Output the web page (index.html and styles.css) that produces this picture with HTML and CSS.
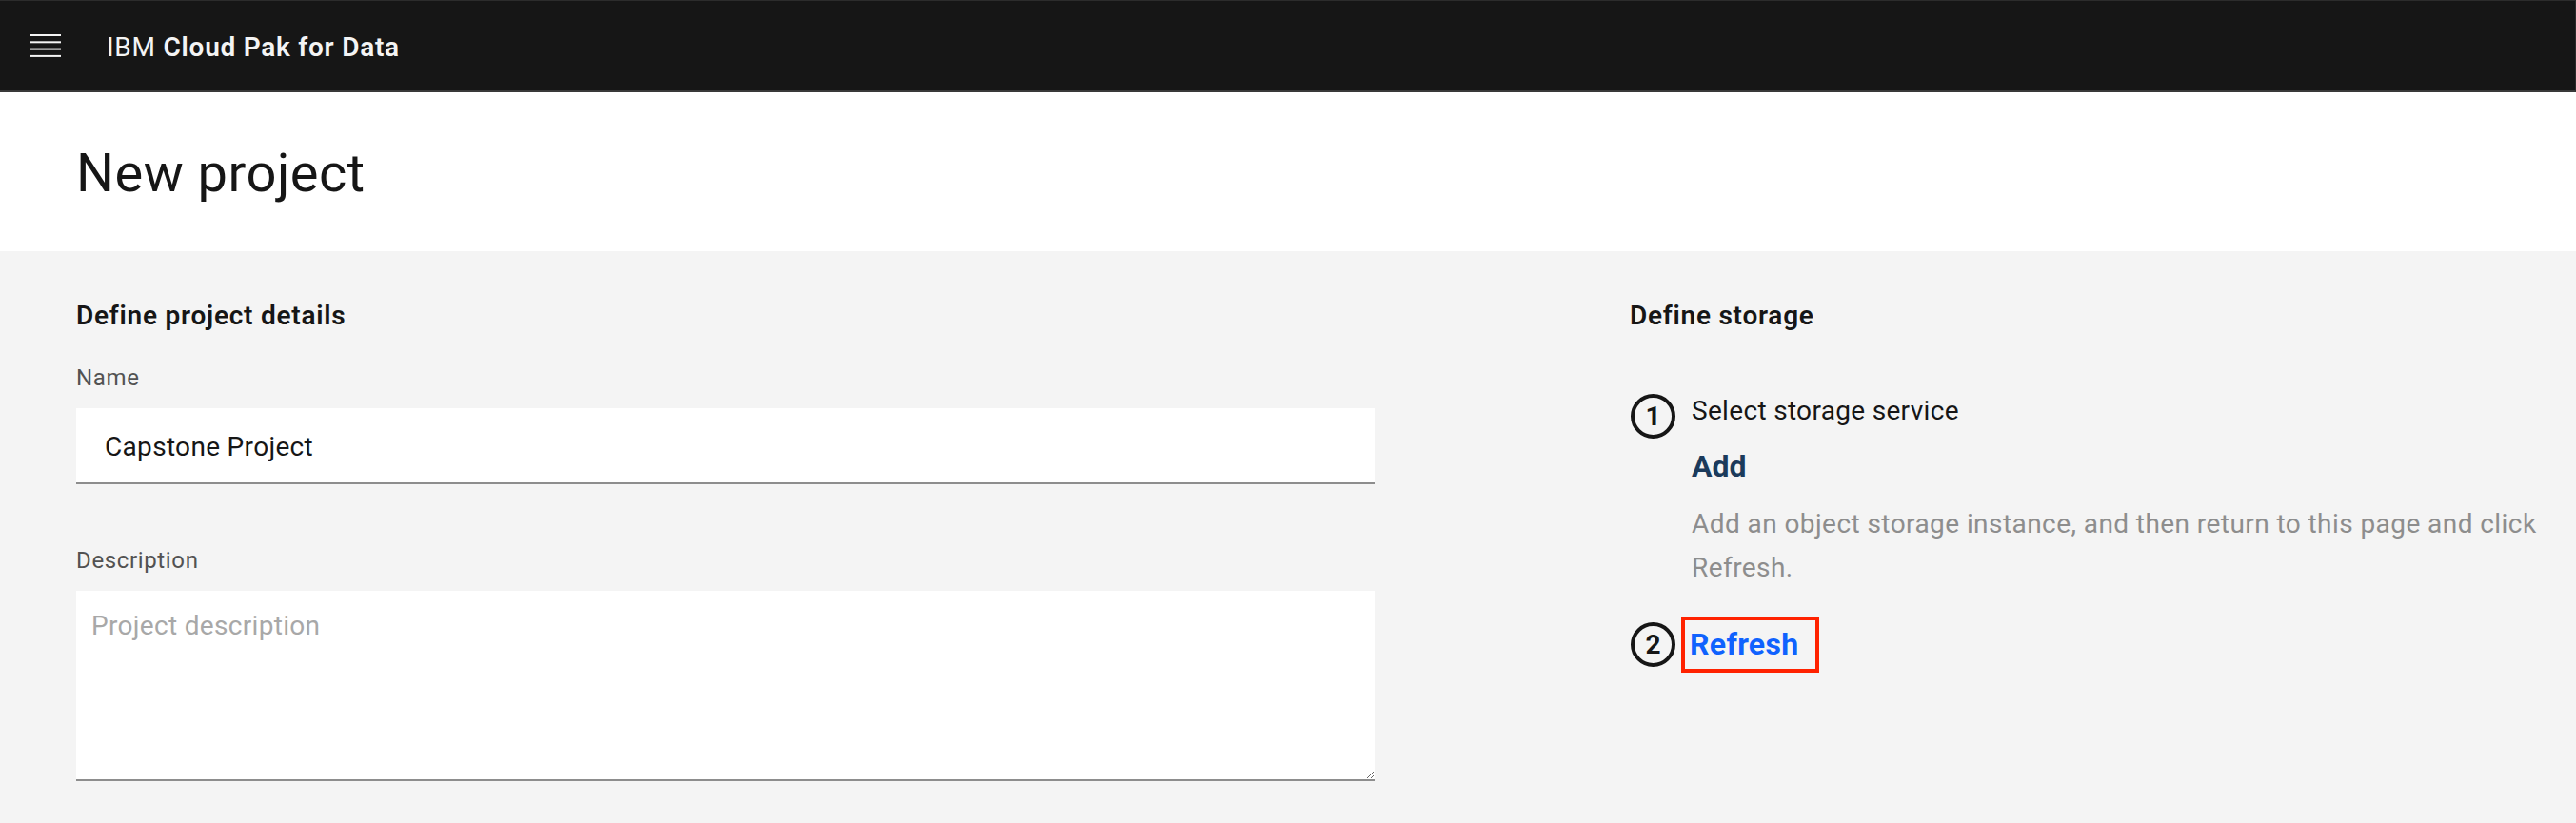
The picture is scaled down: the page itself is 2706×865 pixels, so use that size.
FILE: index.html
```html
<!DOCTYPE html>
<html lang="en">
<head>
<meta charset="utf-8">
<title>New project - IBM Cloud Pak for Data</title>
<link rel="stylesheet" href="styles.css">
</head>
<body>
<header class="topbar">
  <button class="menu" aria-label="Menu">
    <svg width="32" height="24" viewBox="0 0 32 24" aria-hidden="true">
      <rect x="0" y="0" width="32" height="2" fill="#f4f4f4"/>
      <rect x="0" y="7.3" width="32" height="2" fill="#f4f4f4"/>
      <rect x="0" y="14.6" width="32" height="2" fill="#f4f4f4"/>
      <rect x="0" y="21.9" width="32" height="2" fill="#f4f4f4"/>
    </svg>
  </button>
  <span class="brand">IBM <b>Cloud Pak for Data</b></span>
</header>

<section class="page-head">
  <h1 class="page-title">New project</h1>
</section>

<main class="content">
  <section class="details">
    <h2 class="section-title">Define project details</h2>
    <label class="label" for="name">Name</label>
    <input class="field" id="name" type="text" value="Capstone Project">
    <label class="label label-desc" for="desc">Description</label>
    <textarea class="field area" id="desc" placeholder="Project description"></textarea>
  </section>

  <section class="storage">
    <h2 class="section-title">Define storage</h2>
    <ol class="steps">
      <li class="step">
        <span class="num">1</span>
        <div class="step-body">
          <p class="step-title">Select storage service</p>
          <a class="add">Add</a>
          <p class="hint">Add an object storage instance, and then return to this page and click Refresh.</p>
        </div>
      </li>
      <li class="step step-2">
        <span class="num">2</span>
        <span class="refresh-box"><a class="refresh">Refresh</a></span>
      </li>
    </ol>
  </section>
</main>
</body>
</html>
```

FILE: styles.css
```css
* { box-sizing: border-box; }

html, body {
  margin: 0;
  padding: 0;
}

body {
  background: #f4f4f4;
  font-family: Roboto, "Liberation Sans", sans-serif;
  color: #161616;
  min-height: 865px;
}

.topbar {
  height: 97px;
  background: #161616;
  border-top: 1px solid #2c2c2c;
  border-right: 1px solid #2c2c2c;
  border-bottom: 2px solid #393939;
  display: flex;
  align-items: center;
  padding: 0 0 0 32px;
}

.menu {
  background: none;
  border: 0;
  padding: 0;
  margin: 0;
  width: 32px;
  height: 24px;
  display: block;
}

.menu svg { display: block; }

.brand {
  margin-left: 48px;
  padding-top: 3px;
  color: #f4f4f4;
  font-size: 28px;
  line-height: 40px;
  letter-spacing: 0.75px;
}

.brand b { font-weight: 600; }

.page-head {
  background: #ffffff;
  height: 167px;
  padding: 50px 0 0 80px;
}

.page-title {
  margin: 0;
  font-size: 56px;
  line-height: 70px;
  font-weight: 400;
  letter-spacing: 0.5px;
  color: #161616;
}

.content {
  display: grid;
  grid-template-columns: 1364px 1fr;
  column-gap: 268px;
  padding: 48px 0 0 80px;
}

.section-title {
  margin: 0;
  font-size: 28px;
  line-height: 40px;
  font-weight: 600;
  letter-spacing: 0.75px;
  color: #161616;
}

.details {
  display: flex;
  flex-direction: column;
}

.label {
  display: block;
  margin-top: 29px;
  margin-bottom: 16px;
  font-size: 24px;
  line-height: 32px;
  letter-spacing: 0.64px;
  color: #525252;
}

.label-desc { margin-top: 64px; }

.field {
  display: block;
  width: 100%;
  height: 80px;
  margin: 0;
  padding: 2px 30px 0;
  background: #ffffff;
  border: 0;
  border-bottom: 2px solid #8d8d8d;
  border-radius: 0;
  font-family: Roboto, "Liberation Sans", sans-serif;
  font-size: 28px;
  letter-spacing: 0.32px;
  color: #161616;
  outline: none;
}

.area {
  height: 200px;
  padding: 17px 16px 16px;
  line-height: 40px;
  resize: both;
}

.area::placeholder { color: #a8a8a8; }

.steps {
  list-style: none;
  margin: 60px 0 0;
  padding: 0;
}

.step {
  display: flex;
  align-items: flex-start;
  gap: 17px;
}

.num {
  flex: none;
  width: 47px;
  height: 47px;
  margin-top: 2px;
  margin-left: 1px;
  border: 4px solid #161616;
  border-radius: 50%;
  display: flex;
  align-items: center;
  justify-content: center;
  font-size: 28px;
  font-weight: 700;
  color: #161616;
}

.step-title {
  margin: 0;
  font-size: 28px;
  line-height: 40px;
  letter-spacing: 0.32px;
}

.add {
  display: block;
  margin-top: 18px;
  font-size: 32px;
  line-height: 40px;
  font-weight: 700;
  color: #1b3a5b;
}

.hint {
  margin: 18px 0 0;
  font-size: 28px;
  line-height: 46px;
  letter-spacing: 0.43px;
  color: #8d8d8d;
}

.step-2 {
  margin-top: 28px;
  align-items: center;
  gap: 6px;
}

.step-2 .num { margin-top: 0; }

.refresh-box {
  display: block;
  border: 4px solid #ff2200;
  padding: 0 18px 0 5px;
}

.refresh {
  display: block;
  font-size: 32px;
  line-height: 51px;
  font-weight: 700;
  letter-spacing: 0.3px;
  color: #0f62fe;
}
```
